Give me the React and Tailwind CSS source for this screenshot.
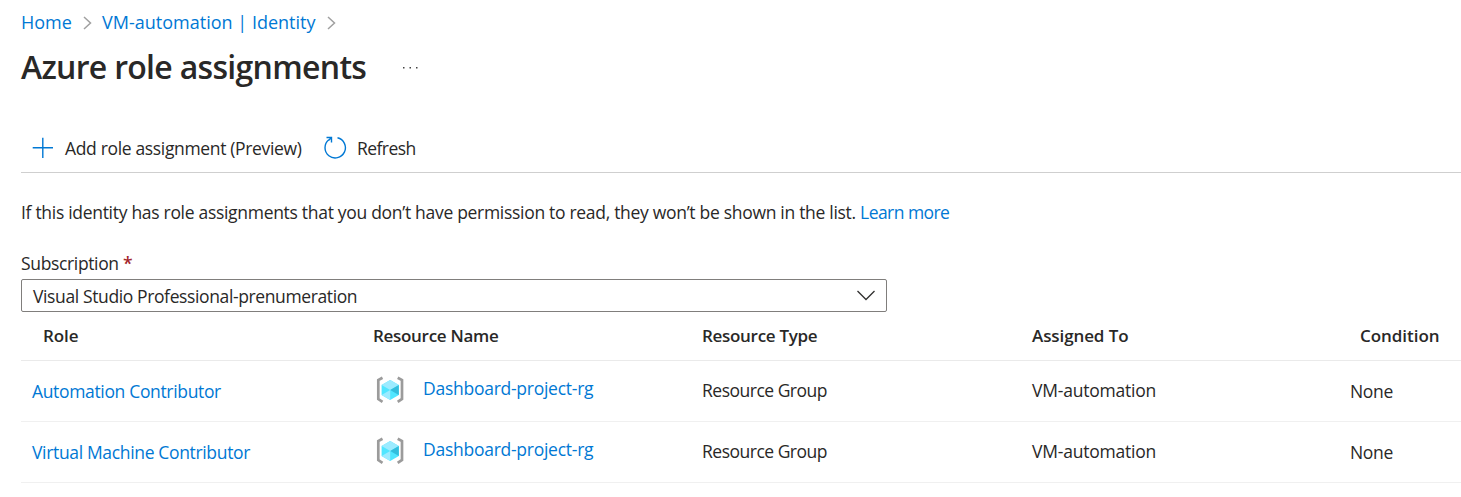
import React from "react";

const LINK = "text-[#0078d4]";

function Crumb() {
  return (
    <svg className="h-[14px] w-[10px] shrink-0" viewBox="0 0 10 14" fill="none" stroke="#a0a0a0" strokeWidth="1.5">
      <path d="M1 1 L7.500 7 L1 13" />
    </svg>
  );
}

function ResourceGroupIcon() {
  return (
    <svg className="h-[28px] w-[28px] shrink-0" viewBox="0 0 28 28" fill="none">
      <path d="M6.5 1.8 L2.3 4 V23 L6.500 25.800" stroke="#9b9b9b" strokeWidth="2.7" />
      <path d="M21.700 1.8 L26 4 V23 L21.700 25.800" stroke="#9b9b9b" strokeWidth="2.7" />
      <path d="M14.2 4 L22.8 8.900 V18.900 L14.2 24 L5.6 18.900 V8.900Z" fill="#50e6ff" />
      <path d="M14.2 4 L22.8 8.900 L14.2 13.900 L5.6 8.900Z" fill="#9cebff" />
      <path d="M22.8 8.900 V18.900 L14.2 13.900Z" fill="#32bedd" />
      <path d="M5.6 18.900 L14.2 13.900 V24Z" fill="#9cebff" />
    </svg>
  );
}

const ROWS = [
  { role: "Automation Contributor" },
  { role: "Virtual Machine Contributor" },
];

export default function App() {
  return (
    <div className="h-[497px] w-[1461px] overflow-hidden bg-white pl-[21px] font-['Open_Sans',sans-serif] text-[17.5px] whitespace-nowrap text-[#292827]">
      <nav className={`flex h-[45px] items-center text-[18px] ${LINK}`}>
        <a className="w-[62px]">Home</a>
        <Crumb />
        <a className="ml-[9px] w-[225px] tracking-[0.01px]">VM-automation | Identity</a>
        <Crumb />
      </nav>
      <header className="flex h-[46px] items-center">
        <h1 className="w-[380px] pb-[2px] text-[32px] font-semibold tracking-[-0.7px]">Azure role assignments</h1>
        <svg className="h-[4px] w-[18px]" viewBox="0 0 18 4" fill="#444">
          <rect x="2" y="1" width="1.5" height="1.5" />
          <rect x="8.500" y="1" width="1.5" height="1.5" />
          <rect x="15" y="1" width="1.5" height="1.5" />
        </svg>
      </header>
      <div className="mt-[33px] flex h-[49px] w-[1440px] items-center border-b border-[#cfcfcf] pl-[11px]">
        <svg className="h-[22px] w-[22px]" viewBox="0 0 22 22" stroke="#0078d4" strokeWidth="1.4">
          <path d="M10.8 0.8 V21 M0.7 10.8 H21" />
        </svg>
        <span className="ml-[11px] w-[258px] tracking-[-0.34px]">Add role assignment (Preview)</span>
        <svg className="h-[24px] w-[24px]" viewBox="0 0 24 24" fill="none" stroke="#0078d4" strokeWidth="1.4">
          <path d="M14.5 1.800 A10.2 10.2 0 1 1 5.800 3.800 M3.5 1.500 H8.5 V6.500 M8.500 1.500 L5.500 4.500" />
        </svg>
        <span className="ml-[10px] tracking-[-0.55px]">Refresh</span>
      </div>
      <p className="mt-[26px] h-[27px] leading-[26px] tracking-[-0.3px]">
        <span>If this identity has role assignments that you don’t have permission to read, they won’t be shown in the list.</span>{" "}
        <a className={`${LINK} tracking-[-0.55px]`}>Learn more</a>
      </p>
      <label className="mt-[24px] block h-[29px] leading-[26px] tracking-[-0.35px]">
        Subscription <span className="font-semibold text-[#a4262c]">*</span>
      </label>
      <div className="flex h-[33px] w-[866px] items-center justify-between rounded-[2px] border border-[#807e7c] pr-[10px] pl-[11px]">
        <span className="pt-[2px] tracking-[-0.38px]">Visual Studio Professional-prenumeration</span>
        <svg className="h-[11px] w-[20px]" viewBox="0 0 20 11" fill="none" stroke="#323130" strokeWidth="1.3">
          <path d="M1.5 1 L10 9.5 L18.500 1" />
        </svg>
      </div>
      <div className="grid h-[49px] w-[1440px] grid-cols-[330px_329px_330px_328px_101px] items-center border-b border-[#eaeaea] pl-[22px] text-[17px] font-semibold tracking-[-0.3px]">
        <span className="tracking-[-0.1px]">Role</span>
        <span>Resource Name</span>
        <span>Resource Type</span>
        <span className="tracking-[-0.1px]">Assigned To</span>
        <span className="tracking-[-0.05px]">Condition</span>
      </div>
      {ROWS.map(({ role }) => (
        <div key={role} className="grid h-[61px] w-[1440px] grid-cols-[341px_329px_330px_318px_100px] items-center border-b border-[#f0f0f0] pb-[2px] pl-[11px] tracking-[-0.34px]">
          <a className={`${LINK} pt-[2px]`}>{role}</a>
          <span className="flex items-center gap-[19px] pl-[3px]">
            <ResourceGroupIcon />
            <a className={`${LINK} pb-[3px] tracking-[-0.26px]`}>Dashboard-project-rg</a>
          </span>
          <span className="tracking-[-0.5px]">Resource Group</span>
          <span className="tracking-[-0.22px]">VM-automation</span>
          <span className="pt-[2px]">None</span>
        </div>
      ))}
    </div>
  );
}
